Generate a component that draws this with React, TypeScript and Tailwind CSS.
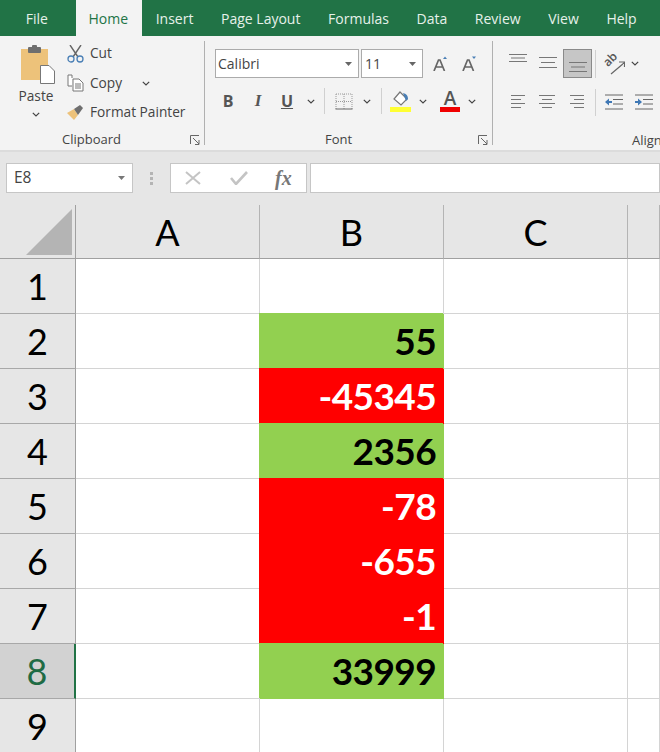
import type { ReactNode } from "react"

const TABS = ["File", "Home", "Insert", "Page Layout", "Formulas", "Data", "Review", "View", "Help"]

const Chevron = ({ className = "" }: { className?: string }) => (
  <svg width="8" height="5" viewBox="0 0 8 5" className={className}>
    <path d="M0.8 0.8 L4 4 L7.2 0.8" fill="none" stroke="#444" strokeWidth="1.2" />
  </svg>
)

const Launcher = () => (
  <svg width="10" height="10" viewBox="0 0 10 10">
    <path d="M0.5 9 V0.5 H9 M3 3 L9 9 M9 5 V9.5 H5" fill="none" stroke="#666" strokeWidth="1" />
  </svg>
)

const VSep = ({ className = "" }: { className?: string }) => <div className={`w-px bg-[#d0d0d0] ${className}`} />

const GroupLabel = ({ label, left }: { label: string; left: string }) => (
  <div className={`-mb-[5px] mt-auto flex h-[20px] items-center justify-between text-[13px] text-[#444] ${left}`}>
    <span>{label}</span>
    <Launcher />
  </div>
)

// alignment glyph: rows are [x, width], gap is the line pitch
const Lines = ({ rows, gap = 4, className = "" }: { rows: [number, number][]; gap?: number; className?: string }) => (
  <svg width="20" height="16" viewBox="0 0 20 16" className={className}>
    {rows.map(([x, w], i) => (
      <rect key={i} x={x} y={1 + i * gap} width={w} height="1" fill="#777" />
    ))}
  </svg>
)

const Cell = ({ children, className = "" }: { children?: ReactNode; className?: string }) => (
  <div className={`border-r border-b border-[#d4d4d4] bg-white ${className}`}>{children}</div>
)

const RowHead = ({ n, active }: { n: number; active?: boolean }) => (
  <div
    className={`flex items-center justify-center border-b border-[#a8a8a8] text-[36px] font-normal ${
      active ? "border-r-2 border-r-[#217346] bg-[#d2d2d2] text-[#1f6b44]" : "border-r border-r-[#a0a0a0] bg-[#e6e6e6] text-black"
    }`}
  >
    {n}
  </div>
)

const ColHead = ({ label }: { label: string }) => (
  <div className="flex items-center justify-center border-r border-b border-r-[#b4b4b4] border-b-[#a0a0a0] bg-[#e6e6e6] text-[36px] text-black">
    {label}
  </div>
)

const VALUES: Record<number, number> = { 2: 55, 3: -45345, 4: 2356, 5: -78, 6: -655, 7: -1, 8: 33999 }

export default function App() {
  const rows = [1, 2, 3, 4, 5, 6, 7, 8, 9]
  return (
    <div className="h-[752px] w-[660px] overflow-hidden bg-[#e6e6e6] font-['Open_Sans',sans-serif]">
      {/* tabs */}
      <div className="flex h-[36px] items-stretch bg-[#217346] pl-[12px] text-[14px] text-[#e6f1ea]">
        {TABS.map((t) => (
          <div
            key={t}
            className={`flex items-center px-[13.8px] ${t === "Home" ? "bg-[#f3f3f3] pl-[12.4px] text-[#217346]" : ""} ${
              t === "File" ? "mr-[14.4px]" : ""
            }`}
          >
            {t}
          </div>
        ))}
      </div>

      {/* ribbon */}
      <div className="flex h-[114px] overflow-hidden bg-[#f3f3f3] text-[13.7px] text-[#444]">
        {/* clipboard */}
        <div className="mt-[5px] mb-[5px] flex w-[205px] shrink-0 flex-col border-r border-[#b0b0b0] pr-[4px]">
          <div className="flex h-[84px]">
            <div className="flex w-[67px] flex-col items-center pl-[9px] pt-[4px]">
              <svg width="36" height="39" viewBox="0 0 36 39">
                <rect x="1" y="4" width="27" height="31" fill="#edc27a" />
                <rect x="8" y="2" width="13" height="6" rx="1" fill="#6e6e6e" />
                <rect x="12" y="0" width="5" height="4" rx="1" fill="#6e6e6e" />
                <path d="M20.5 20.5 H29 L34.5 26 V38.5 H20.5 Z" fill="#fff" stroke="#777" />
              </svg>
              <span className="-ml-[4px] mt-[2px] leading-[19px]">Paste</span>
              <Chevron className="-ml-[4px] mt-[7px]" />
            </div>
            <div className="flex flex-col">
              <div className="flex h-[25px] items-center">
                <svg width="17" height="18" viewBox="0 0 17 18" className="mr-[6px]">
                  <path d="M3 0 L11 12 M14 0 L6 12" stroke="#666" strokeWidth="1.4" fill="none" />
                  <circle cx="4" cy="14" r="3" fill="none" stroke="#4a7fb5" strokeWidth="1.3" />
                  <circle cx="13" cy="14" r="3" fill="none" stroke="#4a7fb5" strokeWidth="1.3" />
                </svg>
                Cut
              </div>
              <div className="flex h-[34px] items-center">
                <svg width="17" height="18" viewBox="0 0 17 18" className="mr-[6px]">
                  <path d="M5 4 V1 H1 V12 H5" fill="#fff" stroke="#777" />
                  <path d="M6 5 H12 L16 9 V17 H6 Z" fill="#fff" stroke="#777" />
                  <path d="M8 10 H14 M8 12 H14 M8 14 H14" stroke="#777" />
                </svg>
                Copy
                <Chevron className="ml-[20px]" />
              </div>
              <div className="flex h-[24px] items-center">
                <svg width="18" height="15" viewBox="0 0 18 15" className="mr-[5px]">
                  <path d="M0 8 L7 4 L11 10 L7 15 Z" fill="#edc27a" />
                  <path d="M7 4 L13 0 L16 3 L11 10 Z" fill="#6e6e6e" />
                </svg>
                Format Painter
              </div>
            </div>
          </div>
          <GroupLabel label="Clipboard" left="pl-[62px]" />
        </div>

        {/* font */}
        <div className="mt-[5px] mb-[5px] flex w-[288px] shrink-0 flex-col border-r border-[#b0b0b0] pr-[4px] pl-[10px]">
          <div className="mt-[8px] flex h-[29px] items-stretch">
            <div className="flex w-[144px] items-center justify-between border border-[#ababab] bg-white pr-[6px] pl-[2px] text-[14px]">
              Calibri
              <svg width="7" height="4" viewBox="0 0 7 4"><path d="M0 0 H7 L3.5 4 Z" fill="#666" /></svg>
            </div>
            <div className="ml-[2px] flex w-[62px] items-center justify-between border border-[#ababab] bg-white pr-[6px] pl-[3px] text-[14px]">
              11
              <svg width="7" height="4" viewBox="0 0 7 4"><path d="M0 0 H7 L3.5 4 Z" fill="#666" /></svg>
            </div>
            <div className="ml-[3px] flex w-[29px] items-center justify-center">
              <svg width="15" height="15" viewBox="0 0 15 15">
                <path d="M1 15 L5.5 4 H7 L11.5 15 M3 11 H9.5" fill="none" stroke="#666" strokeWidth="1.7" />
                <path d="M10 3 L12 0.5 L14 3 Z" fill="#4a7fb5" />
              </svg>
            </div>
            <div className="flex w-[29px] items-center justify-center">
              <svg width="15" height="15" viewBox="0 0 15 15">
                <path d="M1 15 L5.5 4 H7 L11.5 15 M3 11 H9.5" fill="none" stroke="#666" strokeWidth="1.7" />
                <path d="M10 0.5 L14 0.5 L12 3 Z" fill="#4a7fb5" />
              </svg>
            </div>
          </div>
          <div className="mt-[8px] flex h-[30px] items-center text-[#555]">
            <span className="w-[26px] text-center text-[16px] font-bold">B</span>
            <span className="ml-[4px] w-[26px] text-center font-['Liberation_Serif',serif] text-[17px] font-bold italic">I</span>
            <span className="ml-[4px] w-[24px] text-center text-[16px] font-bold underline">U</span>
            <Chevron className="ml-[8px]" />
            <VSep className="ml-[9px] h-[26px]" />
            <svg width="18" height="17" viewBox="0 0 18 17" className="ml-[10px]">
              <path d="M1 1 H17 M1 8.5 H17 M1 1 V16 M9 1 V16 M17 1 V16" stroke="#999" strokeDasharray="1 1" fill="none" />
              <path d="M0.5 16 H17.5" stroke="#666" />
            </svg>
            <Chevron className="ml-[10px]" />
            <VSep className="ml-[10px] h-[26px]" />
            <div className="ml-[8px] flex w-[21px] flex-col items-center">
              <svg width="18" height="16" viewBox="0 0 18 16">
                <path d="M8 1 L15 8 L9 14 L2 8 Z" fill="#fff" stroke="#777" strokeWidth="1.2" />
                <path d="M11 2 Q16 3 16 8 L14 10 Z" fill="#4a7fb5" />
              </svg>
              <div className="h-[5px] w-[21px] bg-[#ffff33]" />
            </div>
            <Chevron className="ml-[8px]" />
            <div className="ml-[13px] flex w-[20px] flex-col items-center">
              <span className="h-[16px] text-[19px] leading-[16px] font-semibold">A</span>
              <div className="mt-[1px] h-[5px] w-[20px] bg-[#f00000]" />
            </div>
            <Chevron className="ml-[8px]" />
          </div>
          <GroupLabel label="Font" left="pl-[110px]" />
        </div>

        {/* alignment */}
        <div className="flex flex-col pl-[10px] pt-[13px]">
          <div className="flex h-[29px] items-stretch">
            <div className="flex w-[29px] items-start justify-center pt-[4px]"><Lines gap={3.5} rows={[[1, 18], [3, 14], [1, 18]]} /></div>
            <div className="flex w-[31px] items-center justify-center"><Lines gap={5} rows={[[1, 18], [3, 14], [1, 18]]} /></div>
            <div className="flex w-[29px] items-end justify-center border border-[#8a8a8a] bg-[#c6c6c6]"><Lines gap={4.5} rows={[[1, 18], [3, 14], [1, 18]]} /></div>
            <VSep className="ml-[3px] mt-[1px]" />
            <div className="ml-[8px] flex items-center">
              <svg width="21" height="22" viewBox="0 0 21 22">
                <text x="0" y="11" fontSize="12" fontWeight="600" fill="#555" transform="rotate(-45 6 8)" fontFamily="Open Sans">ab</text>
                <path d="M7 21 L20 10 M15 9 H20.5 V14" fill="none" stroke="#666" strokeWidth="1.2" />
              </svg>
              <Chevron className="ml-[6px]" />
            </div>
          </div>
          <div className="mt-[9px] flex h-[30px] items-center">
            <div className="flex w-[29px] justify-center"><Lines rows={[[3, 14], [3, 10], [3, 14], [3, 10]]} /></div>
            <div className="flex w-[30px] justify-center"><Lines rows={[[2, 16], [5, 10], [2, 16], [5, 10]]} /></div>
            <div className="flex w-[30px] justify-center"><Lines rows={[[3, 14], [7, 10], [3, 14], [7, 10]]} /></div>
            <VSep className="ml-[3px] h-[27px]" />
            <svg width="20" height="17" viewBox="0 0 20 17" className="ml-[8px]">
              <path d="M1 1 H19 M9 5.5 H19 M9 10 H19 M1 15 H19" stroke="#666" />
              <path d="M1 8 L5 4.5 V7 H8 V9 H5 V11.5 Z" fill="#3f78b5" />
            </svg>
            <svg width="20" height="17" viewBox="0 0 20 17" className="ml-[10px]">
              <path d="M1 1 H19 M9 5.5 H19 M9 10 H19 M1 15 H19" stroke="#666" />
              <path d="M8 8 L4 4.5 V7 H1 V9 H4 V11.5 Z" fill="#3f78b5" />
            </svg>
          </div>
          <div className="mt-[13px] h-[20px] w-[158px] overflow-hidden pl-[129px] text-[13px] leading-[20px] whitespace-nowrap">Alignment</div>
        </div>
      </div>

      {/* formula bar */}
      <div className="h-[2px] bg-[#dcdcdc]" />
      <div className="flex h-[53px] pt-[11px] pl-[6px] text-[15.5px]">
        <div className="flex h-[30px] w-[127px] items-center justify-between border border-[#c6c6c6] bg-white pr-[7px] pl-[7px] text-[#444]">
          E8
          <svg width="7" height="4" viewBox="0 0 7 4"><path d="M0 0 H7 L3.5 4 Z" fill="#777" /></svg>
        </div>
        <div className="ml-[16px] flex h-[30px] w-[5px] flex-col items-center justify-center gap-[2px]">
          <div className="h-[3px] w-[3px] bg-[#b4b4b4]" />
          <div className="h-[3px] w-[3px] bg-[#b4b4b4]" />
          <div className="h-[3px] w-[3px] bg-[#b4b4b4]" />
        </div>
        <div className="ml-[16px] flex h-[30px] w-[137px] items-center border border-[#c6c6c6] bg-white pl-[14px]">
          <svg width="16" height="14" viewBox="0 0 16 14">
            <path d="M1 1 L15 13 M15 1 L1 13" stroke="#c4c4c4" strokeWidth="2" />
          </svg>
          <svg width="18" height="14" viewBox="0 0 18 14" className="ml-[29px]">
            <path d="M1 7 L6 13 L17 1" stroke="#c4c4c4" strokeWidth="2.6" fill="none" />
          </svg>
          <span className="ml-[27px] font-['Liberation_Serif',serif] text-[20px] font-bold text-[#777] italic">fx</span>
        </div>
        <div className="ml-[3px] h-[30px] flex-1 border border-[#c6c6c6] bg-white" />
      </div>

      {/* sheet */}
      <div className="grid grid-cols-[76px_184px_184px_184px_32px] grid-rows-[54px_repeat(9,55px)] font-['Lato',sans-serif]">
        <div className="flex items-end justify-end border-r border-b border-r-[#a0a0a0] border-b-[#a0a0a0] bg-[#e6e6e6] pr-[3px] pb-[3px]">
          <svg width="46" height="46" viewBox="0 0 46 46"><path d="M46 0 V46 H0 Z" fill="#b4b4b4" /></svg>
        </div>
        <ColHead label="A" />
        <ColHead label="B" />
        <ColHead label="C" />
        <ColHead label="" />
        {rows.map((r) => {
          const v = VALUES[r]
          return [
            <RowHead key={`h${r}`} n={r} active={r === 8} />,
            <Cell key={`a${r}`} />,
            v === undefined ? (
              <Cell key={`b${r}`} />
            ) : v < 0 ? (
              <div
                key={`b${r}`}
                className="flex items-center justify-end border-r border-b border-[#ff0000] bg-[#ff0000] pr-[7px] text-[37px] font-bold tracking-[-0.6px] text-white shadow-[-1px_-1px_0_0_#ff0000]"
              >
                {v}
              </div>
            ) : (
              <div
                key={`b${r}`}
                className="flex items-center justify-end border-r border-b border-[#92d050] bg-[#92d050] pr-[7px] text-[37px] font-bold tracking-[-0.6px] text-black shadow-[-1px_-1px_0_0_#92d050]"
              >
                {v}
              </div>
            ),
            <Cell key={`c${r}`} />,
            <Cell key={`d${r}`} />,
          ]
        })}
      </div>
    </div>
  )
}
